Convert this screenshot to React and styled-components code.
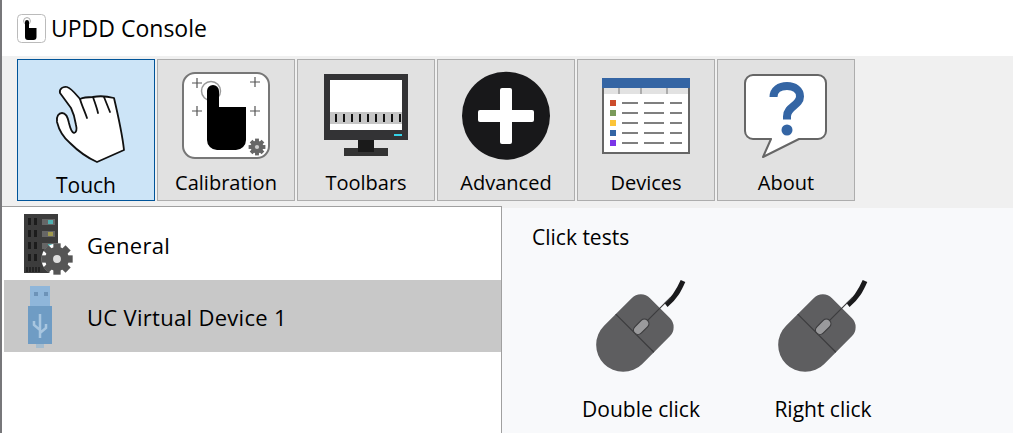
import React from 'react';
import styled, { createGlobalStyle } from 'styled-components';

const GlobalStyle = createGlobalStyle`
    html, body {
        margin: 0;
        padding: 0;
        background: #fff;
    }
    body {
        font-family: "Open Sans", "Noto Sans", "Liberation Sans", sans-serif;
        color: #000;
    }
`

const Window = styled.div`
    width: 1013px;
    height: 433px;
    overflow: hidden;
    box-sizing: border-box;
    border-left: 2px solid #77777a;
    display: flex;
    flex-direction: column;
`

const TitleBar = styled.div`
    height: 56px;
    flex: none;
    display: flex;
    align-items: center;
    gap: 5px;
    padding: 0 0 0 14px;
    box-sizing: border-box;
    background: #fff;
    font-size: 23px;
`

const Toolbar = styled.div`
    height: 150px;
    flex: none;
    display: flex;
    align-items: flex-start;
    gap: 2px;
    padding: 3px 0 0 15px;
    box-sizing: border-box;
    background: #f0f0f0;
`

const ToolButton = styled.div`
    width: 138px;
    height: 142px;
    flex: none;
    box-sizing: border-box;
    display: flex;
    flex-direction: column;
    align-items: center;
    padding-top: 5px;
    background: ${p => p.$active ? '#cce4f7' : '#e1e1e1'};
    border: 1px solid ${p => p.$active ? '#005499' : '#adadad'};
`

const ToolLabel = styled.span`
    font-size: ${p => p.$active ? '21px' : '20px'};
    line-height: 28px;
    margin-top: ${p => p.$active ? '6px' : '4px'};
`

const Main = styled.div`
    flex: 1;
    display: flex;
    min-height: 0;
`

const List = styled.div`
    width: 500px;
    flex: none;
    box-sizing: border-box;
    padding: 1px 0 0 2px;
    background: #fff;
    border-top: 1px solid #a0a0a0;
    border-right: 1px solid #a0a0a0;
`

const ListRow = styled.div`
    height: 72px;
    display: flex;
    align-items: center;
    gap: 3px;
    padding-left: 10px;
    background: ${p => p.$selected ? '#c8c8c8' : 'transparent'};
    font-size: 22px;
    letter-spacing: 0.3px;
`

const RowText = styled.span`
    padding-top: 1px;
`

const Content = styled.div`
    flex: 1;
    background: #f8f9fb;
    border-top: 2px solid #f0f0f0;
    padding: 15px 0 0 30px;
`

const SectionTitle = styled.div`
    font-size: 21px;
    line-height: 28px;
`

const Tests = styled.div`
    display: flex;
    gap: 22px;
    margin: 29px 0 0 29px;
`

const TestItem = styled.div`
    width: 160px;
    display: flex;
    flex-direction: column;
    align-items: center;
    gap: 19px;
    font-size: 21px;
    line-height: 28px;
`

const Gear = ({ cx, cy, r, fill, hole, outline }) => {
    const teeth = [0, 45, 90, 135];
    return (
        <g>
            {outline && <circle cx={cx} cy={cy} r={r + 1.5} fill={outline} />}
            {teeth.map(a => (
                <rect key={a} x={cx - r * 0.26} y={cy - r * 1.12} width={r * 0.52} height={r * 2.24}
                    fill={fill} transform={`rotate(${a} ${cx} ${cy})`} />
            ))}
            <circle cx={cx} cy={cy} r={r * 0.85} fill={fill} />
            <circle cx={cx} cy={cy} r={r * 0.28} fill={hole} />
        </g>
    );
}

const LogoIcon = () => (
    <svg width="30" height="30" viewBox="16 11 30 30">
        <rect x="17.5" y="12.5" width="28" height="28" rx="4" fill="#fff" stroke="#bbb" />
        <circle cx="27" cy="19" r="3.4" fill="none" stroke="#aaa" />
        <path d="M25 20a2 2 0 0 1 4 0v6h7.500v9a3 3 0 0 1-3 3h-5.500a3 3 0 0 1-3-3z" fill="#000" />
    </svg>
);

const HandIcon = () => (
    <svg width="100" height="100" viewBox="36 65 100 100">
        <path d="M60 93C59 89 63 86 67 87C71 88 74 92 80 99C84 97 88 97 93 97C98 96 106 96 114 98C118 115 122 132 124 150L97 162C88 158 78 151 70 143C64 138 59 130 57 122C56 116 59 113 62 113C66 113 68 118 69 123C70 127 71 132 74 133C77 132 77 129 76 125C75 118 73 112 71 108Z"
            fill="#fff" stroke="#111" strokeWidth="1.800" strokeLinejoin="round" />
        <path d="M80 99C82 106 85 112 87 118M93 97C95 103 97 108 98 113M104 97C106 102 108 107 110 112" fill="none" stroke="#111" strokeWidth="1.800" strokeLinecap="round" />
    </svg>
);

const CalibrationIcon = () => (
    <svg width="100" height="100" viewBox="176 65 100 100">
        <rect x="183" y="73" width="86" height="85" rx="12" fill="#fff" stroke="#777" strokeWidth="2" />
        <path d="M192 83h10M197 78v10M250 82h10M255 77v10M192 111h10M197 106v10M250 111h10M255 106v10" stroke="#555" strokeWidth="1.200" />
        <circle cx="211" cy="91" r="9.500" fill="none" stroke="#999" strokeWidth="1.500" />
        <path d="M207 91a6 6 0 0 1 12 0v16h27v33a10 10 0 0 1-10 10h-19a10 10 0 0 1-10-10z" fill="#000" />
        <Gear cx={257} cy={147} r={7.500} fill="#666" hole="#ccc" outline="#fff" />
    </svg>
);

const MonitorIcon = () => (
    <svg width="100" height="100" viewBox="316 65 100 100">
        <rect x="344" y="148" width="44" height="8" fill="#333" />
        <rect x="358" y="140" width="16" height="12" fill="#1a1a1a" />
        <rect x="324" y="74" width="84" height="66" fill="#333335" />
        <rect x="330" y="80" width="72" height="50" fill="#fff" />
        <rect x="330" y="112" width="72" height="12" fill="#c6c6c6" />
        {[0, 1, 2, 3, 4, 5, 6, 7, 8].map(i => (
            <rect key={i} x={335 + i * 8} y="114" width="2" height="8" fill="#111" />
        ))}
        <rect x="394" y="134" width="8" height="2" fill="#35d3e8" />
    </svg>
);

const PlusIcon = () => (
    <svg width="100" height="100" viewBox="456 65 100 100">
        <circle cx="506" cy="115.700" r="44" fill="#18181a" />
        <rect x="478" y="110" width="56" height="12" rx="2" fill="#fff" />
        <rect x="500" y="88" width="12" height="56" rx="2" fill="#fff" />
    </svg>
);

const TableIcon = () => {
    const colors = ['#cc4c2c', '#7a9a5a', '#fcc438', '#3465a4', '#7a35e8'];
    return (
        <svg width="100" height="100" viewBox="596 65 100 100">
            <rect x="603" y="79" width="86" height="74" fill="#fff" stroke="#666" strokeWidth="2" />
            <rect x="604" y="88" width="84" height="6" fill="#e2e2e2" />
            <rect x="602" y="78" width="88" height="10" fill="#3465a4" />
            <path d="M619 88v6M641 88v6M667 88v6" stroke="#777" strokeWidth="1" />
            {colors.map((c, i) => (
                <g key={c}>
                    <rect x="610" y={100 + i * 10} width="6" height="6" fill={c} />
                    <path d={`M622 ${103 + i * 10}h16M644 ${103 + i * 10}h20M670 ${103 + i * 10}h12`} stroke="#555" strokeWidth="1.500" />
                </g>
            ))}
        </svg>
    );
}

const HelpIcon = () => (
    <svg width="100" height="100" viewBox="736 65 100 100">
        <path d="M753 75h65a8 8 0 0 1 8 8v48a8 8 0 0 1-8 8h-19l-36 18 8-18h-18a8 8 0 0 1-8-8v-48a8 8 0 0 1 8-8z"
            fill="#fff" stroke="#666" strokeWidth="2" strokeLinejoin="round" />
        <path d="M773.500 97c0-7 6-11 13.500-11s13 4 13 10.500c0 9-13 10-13 20v3" fill="none" stroke="#3465a4" strokeWidth="8" />
        <circle cx="787" cy="130" r="5.500" fill="#3465a4" />
    </svg>
);

const ServerIcon = () => (
    <svg width="70" height="72" viewBox="14 208 70 72">
        <rect x="24" y="214" width="34" height="59" fill="#3c3c3c" />
        {[0, 1, 2, 3].map(i => (
            <g key={i}>
                <rect x="28" y={218 + i * 12} width="3" height="7" fill="#1c1c1c" />
                <rect x="34" y={218 + i * 12} width="3" height="7" fill="#1c1c1c" />
                {i < 3 && <rect x="42" y={219 + i * 12} width="13" height="6" fill="#666" />}
                {i < 3 && <rect x="48" y={220 + i * 12} width="5" height="4" fill={i === 1 ? '#a09a50' : '#50b0b0'} />}
            </g>
        ))}
        <path d="M27 267v5M30 267v5M33 267v5M36 267v5M39 267v5" stroke="#1c1c1c" strokeWidth="1.500" />
        <Gear cx={57} cy={259} r={14} fill="#555" hole="#ddd" outline="#fff" />
    </svg>
);

const UsbIcon = () => (
    <svg width="70" height="72" viewBox="14 280 70 72">
        <rect x="30" y="286" width="20" height="20" fill="#8fb6da" />
        <rect x="34" y="292" width="4" height="4" fill="#6d93b8" />
        <rect x="44" y="292" width="4" height="4" fill="#6d93b8" />
        <rect x="28" y="306" width="24" height="38" fill="#6f9cc4" />
        <rect x="36" y="344" width="8" height="4" fill="#a4bccf" />
        <path d="M40 314v24M40 330l-6-5v-4M40 333l6-5v-4" fill="none" stroke="#a8c6e0" strokeWidth="2.500" />
    </svg>
);

const MouseIcon = () => (
    <svg width="100" height="96" viewBox="0 0 100 96">
        <path d="M75 25C84 18 88 10 92 1" fill="none" stroke="#1a1a1c" strokeWidth="5" />
        <g transform="translate(-5 14) rotate(45 46 42)">
            <path d="M19 54.500a27 27 0 0 0 54 0v-39a13 13 0 0 0-13-13h-28a13 13 0 0 0-13 13z" fill="#5e5e60" />
            <path d="M19 38h54M46 38v-50" stroke="#3c3c3e" strokeWidth="1.200" fill="none" />
            <rect x="41.500" y="20" width="9" height="18" rx="4.500" fill="#9a9a9c" stroke="#3c3c3e" strokeWidth="1.200" />
        </g>
    </svg>
);

const tools = [
    { name: 'Touch', icon: <HandIcon />, active: true },
    { name: 'Calibration', icon: <CalibrationIcon /> },
    { name: 'Toolbars', icon: <MonitorIcon /> },
    { name: 'Advanced', icon: <PlusIcon /> },
    { name: 'Devices', icon: <TableIcon /> },
    { name: 'About', icon: <HelpIcon /> },
];

const App = () => {
    return(<Window>
        <GlobalStyle />
        <TitleBar>
            <LogoIcon />
            UPDD Console
        </TitleBar>
        <Toolbar>
            {tools.map(t => (
                <ToolButton key={t.name} $active={t.active}>
                    {t.icon}
                    <ToolLabel $active={t.active}>{t.name}</ToolLabel>
                </ToolButton>
            ))}
        </Toolbar>
        <Main>
            <List>
                <ListRow><ServerIcon /><RowText>General</RowText></ListRow>
                <ListRow $selected><UsbIcon /><RowText>UC Virtual Device 1</RowText></ListRow>
            </List>
            <Content>
                <SectionTitle>Click tests</SectionTitle>
                <Tests>
                    <TestItem><MouseIcon />Double click</TestItem>
                    <TestItem><MouseIcon />Right click</TestItem>
                </Tests>
            </Content>
        </Main>
    </Window>);
}

export default App;
